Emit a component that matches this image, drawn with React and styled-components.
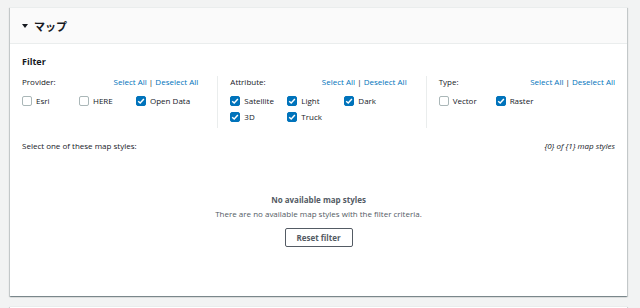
import React from "react";
import styled, { createGlobalStyle } from "styled-components";

const Global = createGlobalStyle`
  html, body { margin: 0; padding: 0; background: #f2f3f3; overflow: hidden; }
  body { font-family: "Open Sans", "Noto Sans CJK JP", sans-serif; color: #16191f; }
`;

const Page = styled.div`
  padding: 7px 13px 0 10px;
  display: flex;
  flex-direction: column;
  gap: 10px;
`;

const Card = styled.section`
  background: #fff;
  box-shadow: 0 1px 1px 0 rgba(0, 28, 36, 0.3), 1px 1px 1px 0 rgba(0, 28, 36, 0.15), -1px 1px 1px 0 rgba(0, 28, 36, 0.15);
  border-top: 1px solid #eaeded;
  height: ${(p) => p.$h}px;
  box-sizing: border-box;
`;

const Header = styled.div`
  height: 36px;
  box-sizing: border-box;
  background: #fafafa;
  border-bottom: 1px solid #eaeded;
  display: flex;
  align-items: center;
  padding-left: 12px;
  gap: 6px;
  font-family: "Noto Sans CJK JP", sans-serif;
  font-weight: 700;
  font-size: 11px;
`;

const Caret = styled.span`
  width: 0;
  height: 0;
  border-left: 3px solid transparent;
  border-right: 3px solid transparent;
  border-top: 4px solid #16191f;
`;

const Body = styled.div`
  padding: 11px 12px 0 12px;
`;

const Title = styled.div`
  font-weight: 700;
  font-size: 9px;
  margin-bottom: 8px;
`;

const Columns = styled.div`
  display: flex;
`;

const Column = styled.div`
  flex: 1;
  padding: 0 ${(p) => (p.$last ? 0 : 19)}px 6px ${(p) => (p.$first ? 0 : 12)}px;
  border-right: ${(p) => (p.$last ? "none" : "1px solid #eaeded")};
  min-width: 0;
`;

const ColHead = styled.div`
  display: flex;
  justify-content: space-between;
  font-size: 8px;
  margin-bottom: 8px;
  color: #16191f;
`;

const Links = styled.span`
  color: #16191f;
`;

const Link = styled.a`
  color: #0073bb;
  text-decoration: none;
`;

const Options = styled.div`
  display: flex;
  flex-wrap: wrap;
  row-gap: 5px;
`;

const Option = styled.label`
  width: 57px;
  display: flex;
  align-items: center;
  gap: 4px;
  font-size: 8px;
  white-space: nowrap;
`;

const Box = styled.span`
  width: 10px;
  height: 10px;
  box-sizing: border-box;
  border-radius: 2px;
  border: 1px solid ${(p) => (p.$on ? "#0073bb" : "#aab7b8")};
  background: ${(p) => (p.$on ? "#0073bb" : "#fff")};
  display: inline-flex;
  align-items: center;
  justify-content: center;
  flex: none;
`;

const ListHead = styled.div`
  display: flex;
  justify-content: space-between;
  font-size: 8px;
  margin-top: 12px;
`;

const Count = styled.span`
  font-style: italic;
  color: #16191f;
`;

const Empty = styled.div`
  display: flex;
  flex-direction: column;
  align-items: center;
  margin-top: 43px;
  font-size: 8px;
  color: #545b64;
`;

const EmptyTitle = styled.div`
  font-weight: 700;
  margin-bottom: 3px;
`;

const Button = styled.button`
  margin-top: 9px;
  width: 68px;
  height: 19px;
  border: 1px solid #545b64;
  border-radius: 2px;
  background: #fff;
  font-family: inherit;
  font-weight: 700;
  font-size: 8px;
  color: #545b64;
  padding: 0;
`;

function Check({ on }) {
  return (
    <Box $on={on}>
      {on && (
        <svg width="8" height="8" viewBox="0 0 10 10">
          <path d="M1.5 5.2 L4 7.6 L8.6 2.4" fill="none" stroke="#fff" strokeWidth="1.8" />
        </svg>
      )}
    </Box>
  );
}

const groups = [
  { label: "Provider:", items: [["Esri", false], ["HERE", false], ["Open Data", true]] },
  { label: "Attribute:", items: [["Satellite", true], ["Light", true], ["Dark", true], ["3D", true], ["Truck", true]] },
  { label: "Type:", items: [["Vector", false], ["Raster", true]] },
];

export default function App() {
  return (
    <>
      <Global />
      <Page>
        <Card $h={289}>
          <Header>
            <Caret />
            <span>マップ</span>
          </Header>
          <Body>
            <Title>Filter</Title>
            <Columns>
              {groups.map((g, i) => (
                <Column key={g.label} $first={i === 0} $last={i === groups.length - 1}>
                  <ColHead>
                    <span>{g.label}</span>
                    <Links>
                      <Link>Select All</Link> | <Link>Deselect All</Link>
                    </Links>
                  </ColHead>
                  <Options>
                    {g.items.map(([name, on]) => (
                      <Option key={name}>
                        <Check on={on} />
                        {name}
                      </Option>
                    ))}
                  </Options>
                </Column>
              ))}
            </Columns>
            <ListHead>
              <span>Select one of these map styles:</span>
              <Count>{"{0} of {1} map styles"}</Count>
            </ListHead>
            <Empty>
              <EmptyTitle>No available map styles</EmptyTitle>
              <div>There are no available map styles with the filter criteria.</div>
              <Button>Reset filter</Button>
            </Empty>
          </Body>
        </Card>
        <Card $h={2} />
      </Page>
    </>
  );
}
